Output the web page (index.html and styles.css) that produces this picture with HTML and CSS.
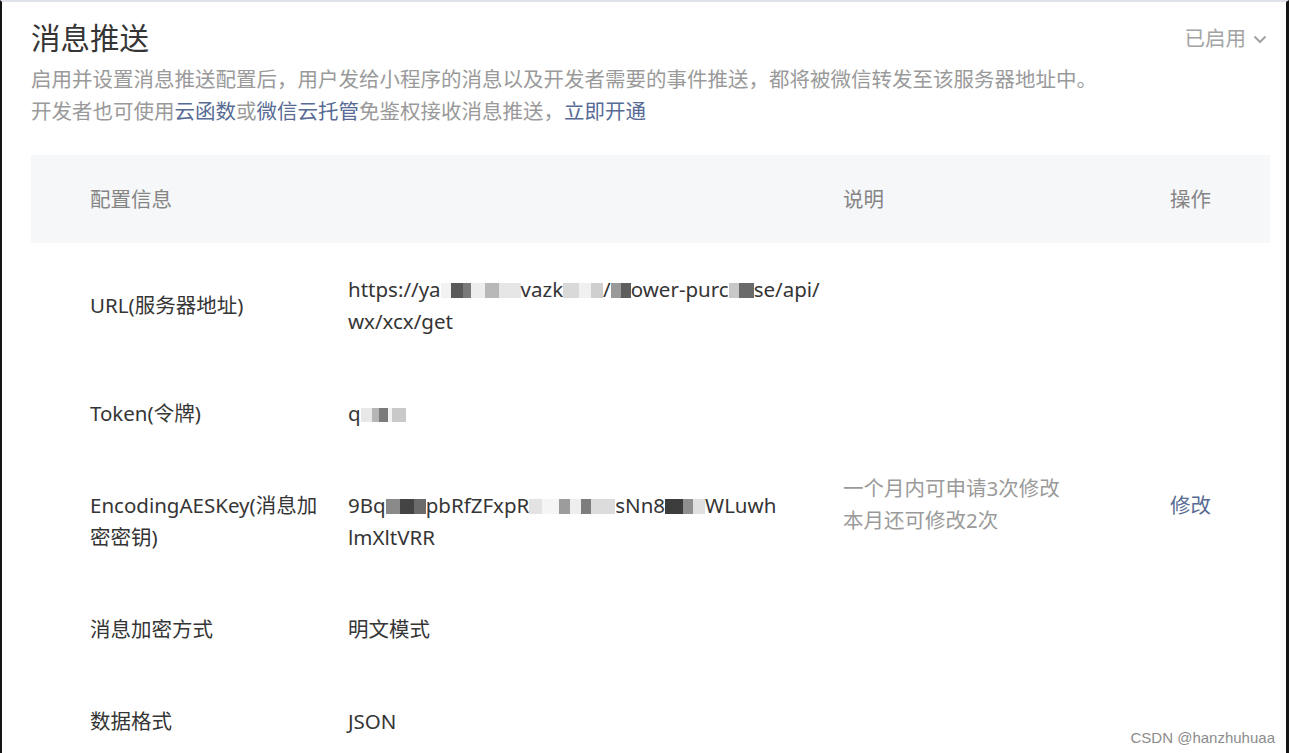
FILE: index.html
```html
<!DOCTYPE html>
<html lang="zh-CN">
<head>
<meta charset="utf-8">
<title>消息推送</title>
<link rel="stylesheet" href="styles.css">
</head>
<body>
<div class="frame">
  <header class="head">
    <div class="head-text">
      <h1 class="title">消息推送</h1>
      <p class="desc">启用并设置消息推送配置后，用户发给小程序的消息以及开发者需要的事件推送，都将被微信转发至该服务器地址中。<br>开发者也可使用<a class="link" href="#">云函数</a>或<a class="link" href="#">微信云托管</a>免鉴权接收消息推送，<a class="link" href="#">立即开通</a></p>
    </div>
    <div class="status">已启用<svg class="chev" width="14" height="9" viewBox="0 0 14 9"><path d="M1.5 1.5 L7 7 L12.5 1.5" fill="none" stroke="#a3a3a3" stroke-width="2"/></svg></div>
  </header>

  <div class="table">
    <div class="row row-head">
      <div class="cell">配置信息</div>
      <div class="cell"></div>
      <div class="cell">说明</div>
      <div class="cell">操作</div>
    </div>
    <div class="row">
      <div class="cell label">URL(服务器地址)</div>
      <div class="cell value">https://ya<span class="mosaic m1"></span>vazk<span class="mosaic m2"></span>/<span class="mosaic m3"></span>ower-purc<span class="mosaic m4"></span>se/api/<br>wx/xcx/get</div>
      <div class="cell note"></div>
      <div class="cell op"></div>
    </div>
    <div class="row">
      <div class="cell label">Token(令牌)</div>
      <div class="cell value">q<span class="mosaic m5"></span></div>
      <div class="cell note"></div>
      <div class="cell op"></div>
    </div>
    <div class="row">
      <div class="cell label">EncodingAESKey(消息加密密钥)</div>
      <div class="cell value">9Bq<span class="mosaic m6"></span>pbRfZFxpR<span class="mosaic m7"></span>sNn8<span class="mosaic m8"></span>WLuwh<br>lmXltVRR</div>
      <div class="cell note note-top">一个月内可申请3次修改<br>本月还可修改2次</div>
      <div class="cell op op-top"><a class="link" href="#">修改</a></div>
    </div>
    <div class="row">
      <div class="cell label">消息加密方式</div>
      <div class="cell value">明文模式</div>
      <div class="cell note"></div>
      <div class="cell op"></div>
    </div>
    <div class="row">
      <div class="cell label">数据格式</div>
      <div class="cell value">JSON</div>
      <div class="cell note"></div>
      <div class="cell op"></div>
    </div>
  </div>

  <div class="watermark">CSDN @hanzhuhuaa</div>
</div>
</body>
</html>
```

FILE: styles.css
```css
html, body {
  margin: 0;
  padding: 0;
  background: #ffffff;
}

body {
  font-family: "Noto Sans", "Noto Sans CJK SC", sans-serif;
  color: #353535;
}

.frame {
  position: relative;
  box-sizing: border-box;
  height: 100vh;
  overflow: hidden;
  border-left: 2px solid #141414;
  border-right: 3px solid #141414;
  border-top: 2px solid #dfe2e8;
  padding: 16px 16px 0 29px;
}

.head {
  display: flex;
  justify-content: space-between;
  align-items: flex-start;
}

.title {
  margin: 0;
  font-size: 29.5px;
  line-height: 40px;
  font-weight: 400;
  color: #353535;
}

.desc {
  margin: 5px 0 0 0;
  font-size: 20.5px;
  line-height: 32px;
  color: #9a9a9a;
}

.link {
  color: #576b95;
  text-decoration: none;
}

.status {
  display: flex;
  align-items: center;
  gap: 7px;
  margin-right: 3px;
  font-size: 20.5px;
  line-height: 40px;
  color: #a3a3a3;
}

.chev {
  display: block;
  margin-top: 2px;
}

.table {
  margin-top: 28px;
}

.row {
  display: grid;
  grid-template-columns: 258px 495px 327px 1fr;
  align-items: center;
  padding: 30px 0 30px 59px;
  font-size: 20.5px;
  line-height: 32px;
}

.row-head {
  background: #f6f7f9;
  padding-top: 28px;
  padding-bottom: 28px;
  color: #858585;
}

.label {
  padding-right: 14px;
  color: #353535;
}

.value {
  color: #353535;
  white-space: nowrap;
}

.note {
  color: #9a9a9a;
}

.note-top {
  align-self: start;
  margin-top: -17px;
}

.op-top {
  align-self: start;
}

.mosaic {
  display: inline-block;
  height: 15px;
  vertical-align: -1px;
}

.m1 {
  width: 80px;
  background: linear-gradient(90deg, #f2f2f2 0 12%, #5a5a5a 12% 28%, #7a7a7a 28% 38%, #ededed 38% 55%, #b8b8b8 55% 72%, #e6e6e6 72% 100%);
}

.m2 {
  width: 40px;
  background: linear-gradient(90deg, #d9d9d9 0 40%, #f0f0f0 40% 70%, #cfcfcf 70% 100%);
}

.m3 {
  width: 20px;
  background: linear-gradient(90deg, #9a9a9a 0 50%, #5e5e5e 50% 100%);
}

.m4 {
  width: 25px;
  background: linear-gradient(90deg, #c8c8c8 0 40%, #6a6a6a 40% 100%);
}

.m5 {
  width: 45px;
  height: 14px;
  background: linear-gradient(90deg, #e8e8e8 0 25%, #b5b5b5 25% 40%, #7b7b7b 40% 60%, #f4f4f4 60% 70%, #c9c9c9 70% 100%);
}

.m6 {
  width: 40px;
  background: linear-gradient(90deg, #8a8a8a 0 35%, #444444 35% 70%, #6b6b6b 70% 100%);
}

.m7 {
  width: 86px;
  background: linear-gradient(90deg, #e3e3e3 0 15%, #f5f5f5 15% 35%, #9c9c9c 35% 48%, #eeeeee 48% 60%, #7d7d7d 60% 72%, #dcdcdc 72% 100%);
}

.m8 {
  width: 40px;
  background: linear-gradient(90deg, #3c3c3c 0 45%, #8f8f8f 45% 70%, #e0e0e0 70% 100%);
}

.watermark {
  position: absolute;
  right: 11px;
  bottom: 6px;
  font-family: "Liberation Sans", Arial, sans-serif;
  font-size: 15px;
  line-height: 18px;
  color: #8c8c8c;
}
```
